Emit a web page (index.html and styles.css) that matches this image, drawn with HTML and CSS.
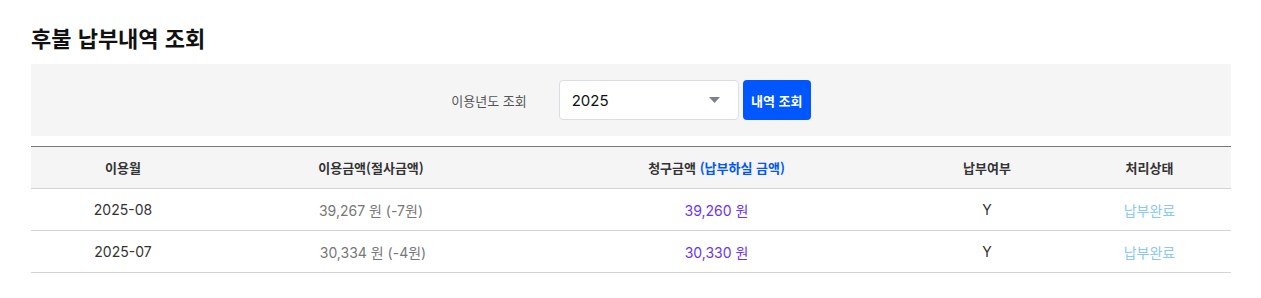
FILE: index.html
```html
<!DOCTYPE html>
<html lang="ko">
<head>
<meta charset="utf-8">
<title>후불 납부내역 조회</title>
<link rel="stylesheet" href="styles.css">
</head>
<body>
<div class="page">
  <h1 class="title">후불 납부내역 조회</h1>
  <div class="search">
    <span class="search-label">이용년도 조회</span>
    <div class="select">
      <span class="select-value">2025</span>
      <svg class="caret" width="11" height="6" viewBox="0 0 11 6"><path d="M0 0H11L5.5 6Z" fill="#7c818c"/></svg>
    </div>
    <button class="btn">내역 조회</button>
  </div>
  <table class="list">
    <colgroup>
      <col class="c1"><col class="c2"><col class="c3"><col class="c4"><col class="c5">
    </colgroup>
    <thead>
      <tr>
        <th>이용월</th>
        <th>이용금액(절사금액)</th>
        <th>청구금액 <span class="hl">(납부하실 금액)</span></th>
        <th>납부여부</th>
        <th>처리상태</th>
      </tr>
    </thead>
    <tbody>
      <tr>
        <td>2025-08</td>
        <td class="use">39,267 원 (-7원)</td>
        <td class="bill">39,260 원</td>
        <td>Y</td>
        <td class="status">납부완료</td>
      </tr>
      <tr>
        <td>2025-07</td>
        <td class="use">&nbsp;30,334 원 (-4원)</td>
        <td class="bill">30,330 원</td>
        <td>Y</td>
        <td class="status">납부완료</td>
      </tr>
    </tbody>
  </table>
</div>
</body>
</html>
```
FILE: styles.css
```css
* { box-sizing: border-box; }
html, body { margin: 0; padding: 0; background: #fff; }
body {
  font-family: "Inter", "Noto Sans CJK KR", sans-serif;
  color: #333;
}
.page {
  width: 1200px;
  margin-left: 31px;
  padding-top: 21px;
}
.title {
  margin: 0;
  font-family: "Noto Sans CJK KR", sans-serif;
  font-size: 22px;
  font-weight: 700;
  line-height: 32px;
  color: #111;
}
.search {
  margin-top: 11px;
  height: 72px;
  background: #f5f5f5;
  display: flex;
  align-items: center;
  justify-content: center;
}
.search-label {
  font-family: "Noto Sans CJK KR", sans-serif;
  font-size: 13px;
  color: #555;
  margin-right: 32px;
}
.select {
  width: 180px;
  height: 40px;
  background: #fff;
  border: 1px solid #dcdde3;
  border-radius: 4px;
  display: flex;
  align-items: center;
  justify-content: space-between;
  padding: 0 18px 0 12px;
}
.select-value {
  font-size: 15px;
  color: #111;
}
.btn {
  margin-left: 4px;
  width: 68px;
  height: 40px;
  border: 0;
  border-radius: 4px;
  background: #0057ff;
  color: #fff;
  font-family: "Noto Sans CJK KR", sans-serif;
  font-size: 13px;
  font-weight: 700;
  padding: 0;
}
.list {
  margin-top: 10px;
  width: 1200px;
  border-collapse: collapse;
  table-layout: fixed;
  border-top: 1px solid #777;
}
.c1 { width: 184px; }
.c2 { width: 312px; }
.c3 { width: 379px; }
.c4 { width: 162px; }
.c5 { width: 163px; }
.list th {
  height: 42px;
  background: #f5f5f5;
  font-family: "Noto Sans CJK KR", sans-serif;
  font-size: 13px;
  font-weight: 700;
  color: #333;
  text-align: center;
  border-bottom: 1px solid #d4d4d4;
  padding: 0;
}
.list th .hl { color: #0057ff; }
.list td {
  height: 42px;
  font-size: 14px;
  color: #333;
  text-align: center;
  border-bottom: 1px solid #d4d4d4;
  padding: 0;
}
.list td.use { color: #777; }
.list td.bill { color: #6a33ff; }
.list td.status { color: #8cc8f4; font-family: "Noto Sans CJK KR", sans-serif; }
```
